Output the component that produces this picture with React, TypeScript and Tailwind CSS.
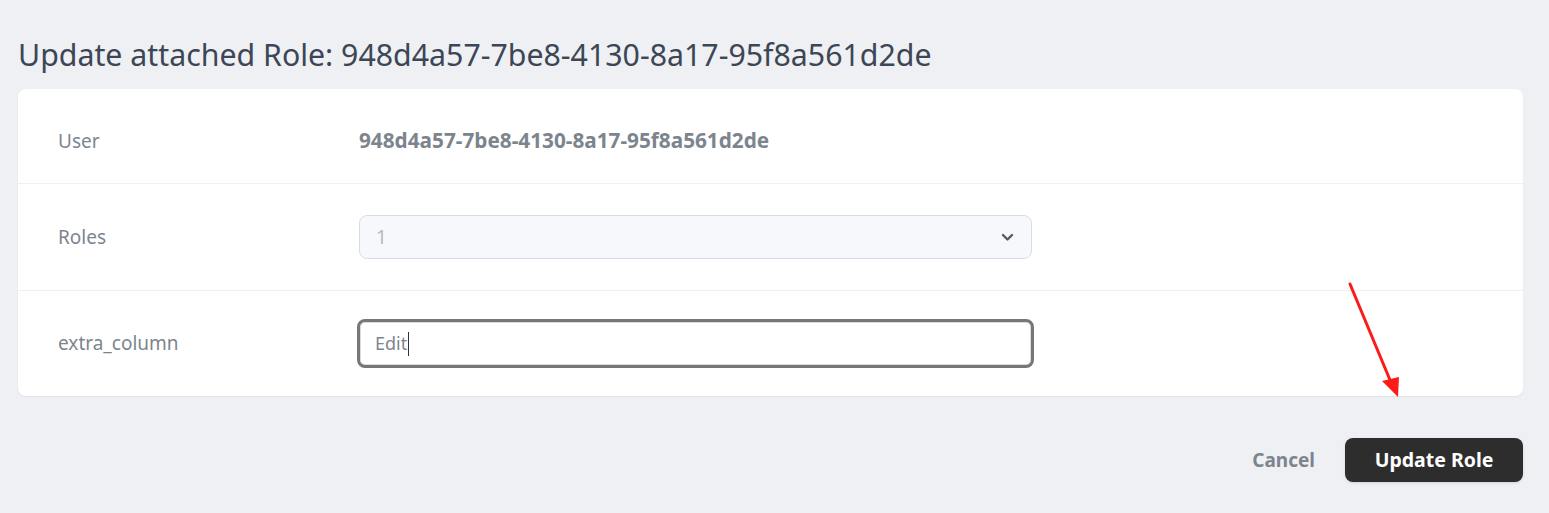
import React from "react";

export default function App() {
  const font = { fontFamily: '"Noto Sans", "Open Sans", sans-serif' };
  return (
    <div className="relative min-h-[513px] w-full bg-[#eef0f4] pl-[18px] pr-[26px] pt-[35px]" style={font}>
      <h1 className="text-[30.3px] leading-[40px] font-normal text-[#3c4655]">
        Update attached Role: 948d4a57-7be8-4130-8a17-95f8a561d2de
      </h1>
      <div className="mt-[14px] rounded-lg bg-white shadow-[0_1px_2px_rgba(0,0,0,0.06)]">
        <div className="flex h-[95px] items-center border-b border-[#eef0f4] pt-[10px]">
          <div className="w-1/5 pl-10 text-[19px] text-[#7c858e]">User</div>
          <div className="w-1/2 px-10 text-[20.75px] font-bold text-[#7c858e]">
            948d4a57-7be8-4130-8a17-95f8a561d2de
          </div>
        </div>
        <div className="flex h-[107px] items-center border-b border-[#eef0f4]">
          <div className="w-1/5 pl-10 text-[19px] text-[#7c858e]">Roles</div>
          <div className="w-1/2 px-10">
            <div className="flex h-[44px] items-center justify-between rounded-lg border border-[#d8dde5] bg-[#f7f8fb] pl-4 pr-4">
              <span className="text-[19px] text-[#b5bac1]">1</span>
              <svg width="13" height="9" viewBox="0 0 13 9" className="mr-[1px]">
                <path d="M2 2 L6.5 6.5 L11 2" fill="none" stroke="#555b62" strokeWidth="2.4" strokeLinecap="round" strokeLinejoin="round" />
              </svg>
            </div>
          </div>
        </div>
        <div className="flex h-[105px] items-center">
          <div className="w-1/5 pl-10 text-[19px] text-[#7c858e]">extra_column</div>
          <div className="w-1/2 px-10">
            <div className="-mx-[2px] flex h-[49px] items-center rounded-lg border-[3px] border-[#777777] bg-white pl-[15px] shadow-[inset_0_0_0_1px_#d8dde5]">
              <span className="text-[18px] text-[#7c858e]">Edit</span>
              <span className="ml-[1px] inline-block h-[24px] w-px bg-[#333]" />
            </div>
          </div>
        </div>
      </div>
      <div className="mt-[42px] flex items-center justify-end gap-[30px]">
        <span className="text-[19px] font-bold text-[#7c858e]">Cancel</span>
        <button className="h-[44px] w-[178px] rounded-lg bg-[#2d2d2d] text-[19.5px] font-bold text-white shadow-sm">
          Update Role
        </button>
      </div>
      <svg className="pointer-events-none absolute left-0 top-0" width="1549" height="513">
        <path d="M1350 284 L1390 380" stroke="#ff1a1a" strokeWidth="3" strokeLinecap="round" />
        <polygon points="1382,381 1399,377 1398,397" fill="#ff1a1a" />
      </svg>
    </div>
  );
}
